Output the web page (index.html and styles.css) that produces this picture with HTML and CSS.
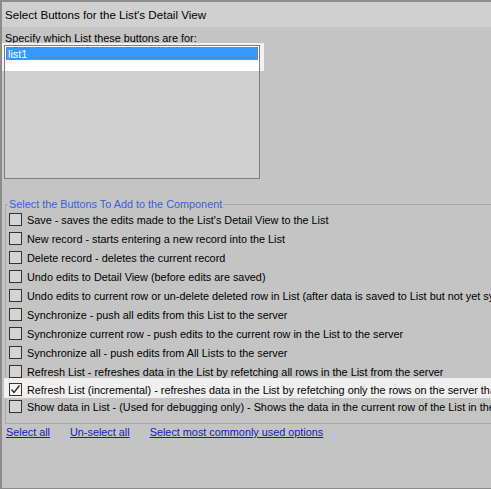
FILE: index.html
```html
<!DOCTYPE html>
<html>
<head>
<meta charset="utf-8">
<link rel="stylesheet" href="styles.css">
</head>
<body>
<div class="window">
  <div class="titlebar">Select Buttons for the List's Detail View</div>
  <div class="content">
    <div class="label">Specify which List these buttons are for:</div>
    <div class="listwrap">
      <div class="halo"></div>
      <div class="listbox">
        <div class="item selected">list1</div>
      </div>
    </div>
    <fieldset class="group">
      <legend>Select the Buttons To Add to the Component</legend>
      <div class="row"><span class="cb"></span><span class="txt">Save - saves the edits made to the List's Detail View to the List</span></div>
      <div class="row"><span class="cb"></span><span class="txt">New record - starts entering a new record into the List</span></div>
      <div class="row"><span class="cb"></span><span class="txt">Delete record - deletes the current record</span></div>
      <div class="row"><span class="cb"></span><span class="txt">Undo edits to Detail View (before edits are saved)</span></div>
      <div class="row"><span class="cb"></span><span class="txt">Undo edits to current row or un-delete deleted row in List (after data is saved to List but not yet synchronized)</span></div>
      <div class="row"><span class="cb"></span><span class="txt">Synchronize - push all edits from this List to the server</span></div>
      <div class="row"><span class="cb"></span><span class="txt">Synchronize current row - push edits to the current row in the List to the server</span></div>
      <div class="row"><span class="cb"></span><span class="txt">Synchronize all - push edits from All Lists to the server</span></div>
      <div class="row"><span class="cb"></span><span class="txt">Refresh List - refreshes data in the List by refetching all rows in the List from the server</span></div>
      <div class="row short hot"><span class="cb checked"><svg width="11" height="11" viewBox="0 0 11 11"><path d="M1.5 5.5 L4 8.5 L9.5 1.5" fill="none" stroke="#2b2b2b" stroke-width="1.4"/></svg></span><span class="txt">Refresh List (incremental) - refreshes data in the List by refetching only the rows on the server that have changed</span></div>
      <div class="row short"><span class="cb"></span><span class="txt">Show data in List - (Used for debugging only) - Shows the data in the current row of the List in the browser console</span></div>
    </fieldset>
    <div class="links">
      <a href="#">Select all</a>
      <a href="#">Un-select all</a>
      <a href="#">Select most commonly used options</a>
    </div>
  </div>
</div>
</body>
</html>
```
FILE: styles.css
```css
html {
  background: #c4c4c4;
}
body {
  margin: 0;
  width: 491px;
  height: 489px;
  overflow: hidden;
  font-family: "Liberation Sans", Arial, sans-serif;
  font-size: 10.85px;
  color: #000;
}
.window {
  width: 760px;
  height: 486px;
  border-top: 2px solid #8c8c8c;
  border-left: 2px solid #8c8c8c;
  border-bottom: 1px solid #8c8c8c;
}
.titlebar {
  height: 25px;
  line-height: 25px;
  padding-left: 3px;
  background: #d0d0d0;
  font-size: 11.6px;
}
.label {
  padding-top: 4px;
  padding-left: 3px;
  line-height: 14px;
}
.listwrap {
  position: relative;
  margin-left: 2px;
  width: 256px;
}
.halo {
  position: absolute;
  left: -2px;
  top: -2px;
  width: 262px;
  height: 28px;
  background: #f2f2f2;
}
.listbox {
  position: relative;
  height: 130px;
  padding: 1px;
  border: 1px solid #7e7e7e;
  background: linear-gradient(#ffffff 0, #ffffff 25px, #d0d0d0 25px);
}
.item {
  height: 13px;
  line-height: 12px;
  padding-left: 1px;
  box-sizing: border-box;
}
.item.selected {
  background: #3399ff;
  color: #ffffff;
  border: 1px dotted #c27a2a;
}
.group {
  margin: 19px 0 0 3px;
  padding: 0 0 8px 2px;
  border: 1px solid #a9a9a9;
  min-width: 0;
  width: 740px;
}
.group legend {
  padding: 0 1px;
  margin: 0;
  line-height: 12px;
  color: #3a60dc;
}
.row {
  position: relative;
  height: 19px;
  display: flex;
  align-items: center;
  padding-left: 1px;
  white-space: nowrap;
}
.row.short {
  height: 17px;
}
.row.hot::before {
  content: "";
  position: absolute;
  left: -4px;
  right: 0;
  top: -3px;
  bottom: 0;
  background: #f0f0f0;
  z-index: 0;
}
.cb {
  position: relative;
  z-index: 1;
  width: 11px;
  height: 11px;
  border: 1px solid #333333;
  background: #d4d4d4;
  margin-right: 5px;
  flex: none;
  display: flex;
  align-items: center;
  justify-content: center;
}
.cb.checked {
  background: #f4f4f4;
}
.txt {
  position: relative;
  z-index: 1;
}
.links {
  display: flex;
  gap: 20px;
  padding-left: 4px;
  line-height: 16px;
}
.links a {
  color: #1515d0;
  text-decoration: underline;
}
```
